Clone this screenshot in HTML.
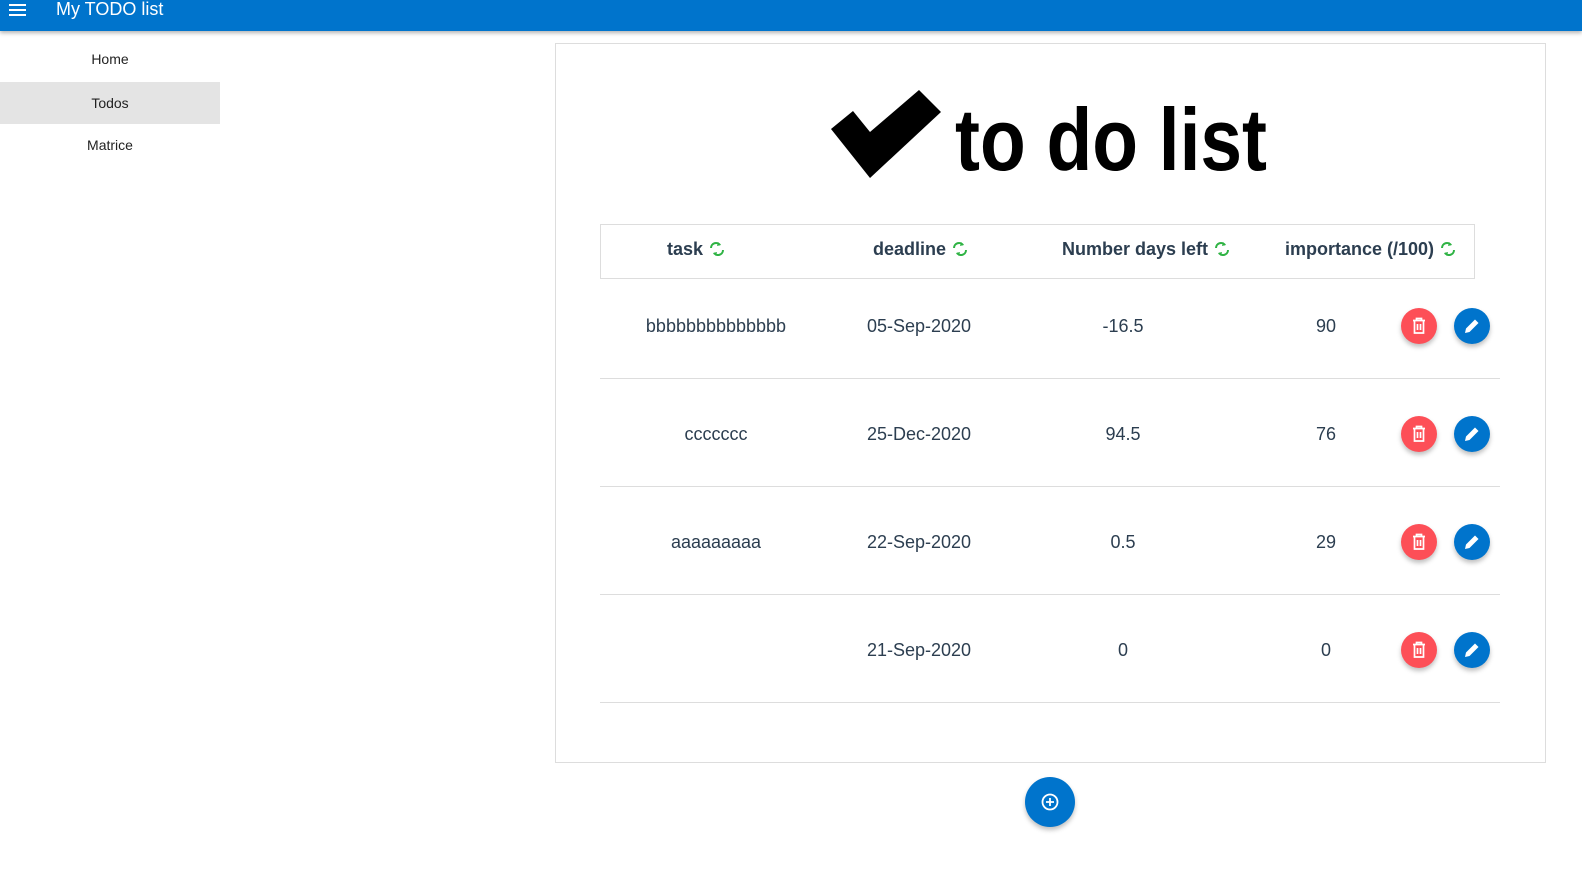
<!DOCTYPE html>
<html><head><style>
body{margin:0;width:1582px;height:869px;position:relative;font-family:"Liberation Sans",Arial,sans-serif;background:#fff;overflow:hidden}
.bar{position:absolute;left:0;top:0;width:1582px;height:31px;background:#0074cc;box-shadow:0 2px 4px rgba(0,0,0,.3);color:#fff}
.bar .t{position:absolute;left:56px;top:-1px;font-size:18px}
.nav div{position:absolute;left:0;width:220px;height:42px;line-height:42px;text-align:center;font-size:14px;color:#222}
.card{position:absolute;left:555px;top:43px;width:989px;height:718px;border:1px solid #ddd}
.th{position:absolute;left:600px;top:224px;width:873px;height:53px;border:1px solid #ddd}
.h{position:absolute;top:239px;font-weight:bold;font-size:18px;color:#2c3e50;white-space:nowrap}
.c{position:absolute;width:200px;margin-left:-100px;text-align:center;font-size:18px;color:#2c3e50}
.sep{position:absolute;left:600px;width:900px;height:1px;background:#ddd}
.b{position:absolute;width:36px;height:36px;border-radius:50%;box-shadow:0 3px 5px rgba(0,0,0,.25)}
.r{background:#fd4f57}.bl{background:#0074cc}
.b svg{position:absolute;left:8px;top:8px}
</style></head><body>
<div class="bar"><svg style="position:absolute;left:9px;top:3px" width="18" height="14"><rect y="1" width="17" height="2" fill="#fff"/><rect y="6" width="17" height="2" fill="#fff"/><rect y="11" width="17" height="2" fill="#fff"/></svg><span class="t">My TODO list</span></div>
<div class="nav"><div style="top:38px">Home</div><div style="top:82px;background:#e4e4e4">Todos</div><div style="top:124px">Matrice</div></div>
<div class="card"></div>
<svg style="position:absolute;left:820px;top:80px" width="460" height="110">
<polygon points="11,49 33,31 50,52 99,10 121,32 50,98" fill="#000"/>
<text x="135" y="90" font-family="Liberation Sans" font-weight="bold" font-size="88" textLength="312" lengthAdjust="spacingAndGlyphs" fill="#000">to do list</text>
</svg>
<div class="th"></div>
<svg width="0" height="0" style="position:absolute"><defs><g id="ref"><path d="M3 8a5 5 0 0 1 9-3M15 10a5 5 0 0 1-9 3" stroke="#2fb344" stroke-width="2" fill="none"/><path d="M10 2l3 3-4 1zM8 16l-3-3 4-1z" fill="#2fb344"/></g></defs></svg>
<div class="h" style="left:667px">task <svg width="18" height="18" style="vertical-align:-3px"><use href="#ref"/></svg></div>
<div class="h" style="left:873px">deadline <svg width="18" height="18" style="vertical-align:-3px"><use href="#ref"/></svg></div>
<div class="h" style="left:1062px">Number days left <svg width="18" height="18" style="vertical-align:-3px"><use href="#ref"/></svg></div>
<div class="h" style="left:1285px">importance (/100) <svg width="18" height="18" style="vertical-align:-3px"><use href="#ref"/></svg></div>

<div class="c" style="left:716px;top:316px">bbbbbbbbbbbbbb</div><div class="c" style="left:919px;top:316px">05-Sep-2020</div><div class="c" style="left:1123px;top:316px">-16.5</div><div class="c" style="left:1326px;top:316px">90</div>
<div class="c" style="left:716px;top:424px">ccccccc</div><div class="c" style="left:919px;top:424px">25-Dec-2020</div><div class="c" style="left:1123px;top:424px">94.5</div><div class="c" style="left:1326px;top:424px">76</div>
<div class="c" style="left:716px;top:532px">aaaaaaaaa</div><div class="c" style="left:919px;top:532px">22-Sep-2020</div><div class="c" style="left:1123px;top:532px">0.5</div><div class="c" style="left:1326px;top:532px">29</div>
<div class="c" style="left:919px;top:640px">21-Sep-2020</div><div class="c" style="left:1123px;top:640px">0</div><div class="c" style="left:1326px;top:640px">0</div>
<div class="sep" style="top:378px"></div><div class="sep" style="top:486px"></div><div class="sep" style="top:594px"></div><div class="sep" style="top:702px"></div>

<div class="b r" style="left:1401px;top:308px"><svg width="20" height="20"><path d="M4 4.5h12M7.5 4.5V2.5h5v2M5.5 5v12h9V5M8.5 8v6M11.5 8v6" stroke="#fff" stroke-width="1.7" fill="none"/></svg></div>
<div class="b bl" style="left:1454px;top:308px"><svg width="20" height="20"><path d="M3 17l1-4.5 9-9 3.5 3.5-9 9z" fill="#fff"/></svg></div>
<div class="b r" style="left:1401px;top:416px"><svg width="20" height="20"><path d="M4 4.5h12M7.5 4.5V2.5h5v2M5.5 5v12h9V5M8.5 8v6M11.5 8v6" stroke="#fff" stroke-width="1.7" fill="none"/></svg></div>
<div class="b bl" style="left:1454px;top:416px"><svg width="20" height="20"><path d="M3 17l1-4.5 9-9 3.5 3.5-9 9z" fill="#fff"/></svg></div>
<div class="b r" style="left:1401px;top:524px"><svg width="20" height="20"><path d="M4 4.5h12M7.5 4.5V2.5h5v2M5.5 5v12h9V5M8.5 8v6M11.5 8v6" stroke="#fff" stroke-width="1.7" fill="none"/></svg></div>
<div class="b bl" style="left:1454px;top:524px"><svg width="20" height="20"><path d="M3 17l1-4.5 9-9 3.5 3.5-9 9z" fill="#fff"/></svg></div>
<div class="b r" style="left:1401px;top:632px"><svg width="20" height="20"><path d="M4 4.5h12M7.5 4.5V2.5h5v2M5.5 5v12h9V5M8.5 8v6M11.5 8v6" stroke="#fff" stroke-width="1.7" fill="none"/></svg></div>
<div class="b bl" style="left:1454px;top:632px"><svg width="20" height="20"><path d="M3 17l1-4.5 9-9 3.5 3.5-9 9z" fill="#fff"/></svg></div>

<div class="b bl" style="left:1025px;top:777px;width:50px;height:50px"><svg width="50" height="50" style="left:0;top:0"><circle cx="25" cy="25" r="7.5" stroke="#fff" stroke-width="1.8" fill="none"/><path d="M25 21v8M21 25h8" stroke="#fff" stroke-width="1.8"/></svg></div>
</body></html>
